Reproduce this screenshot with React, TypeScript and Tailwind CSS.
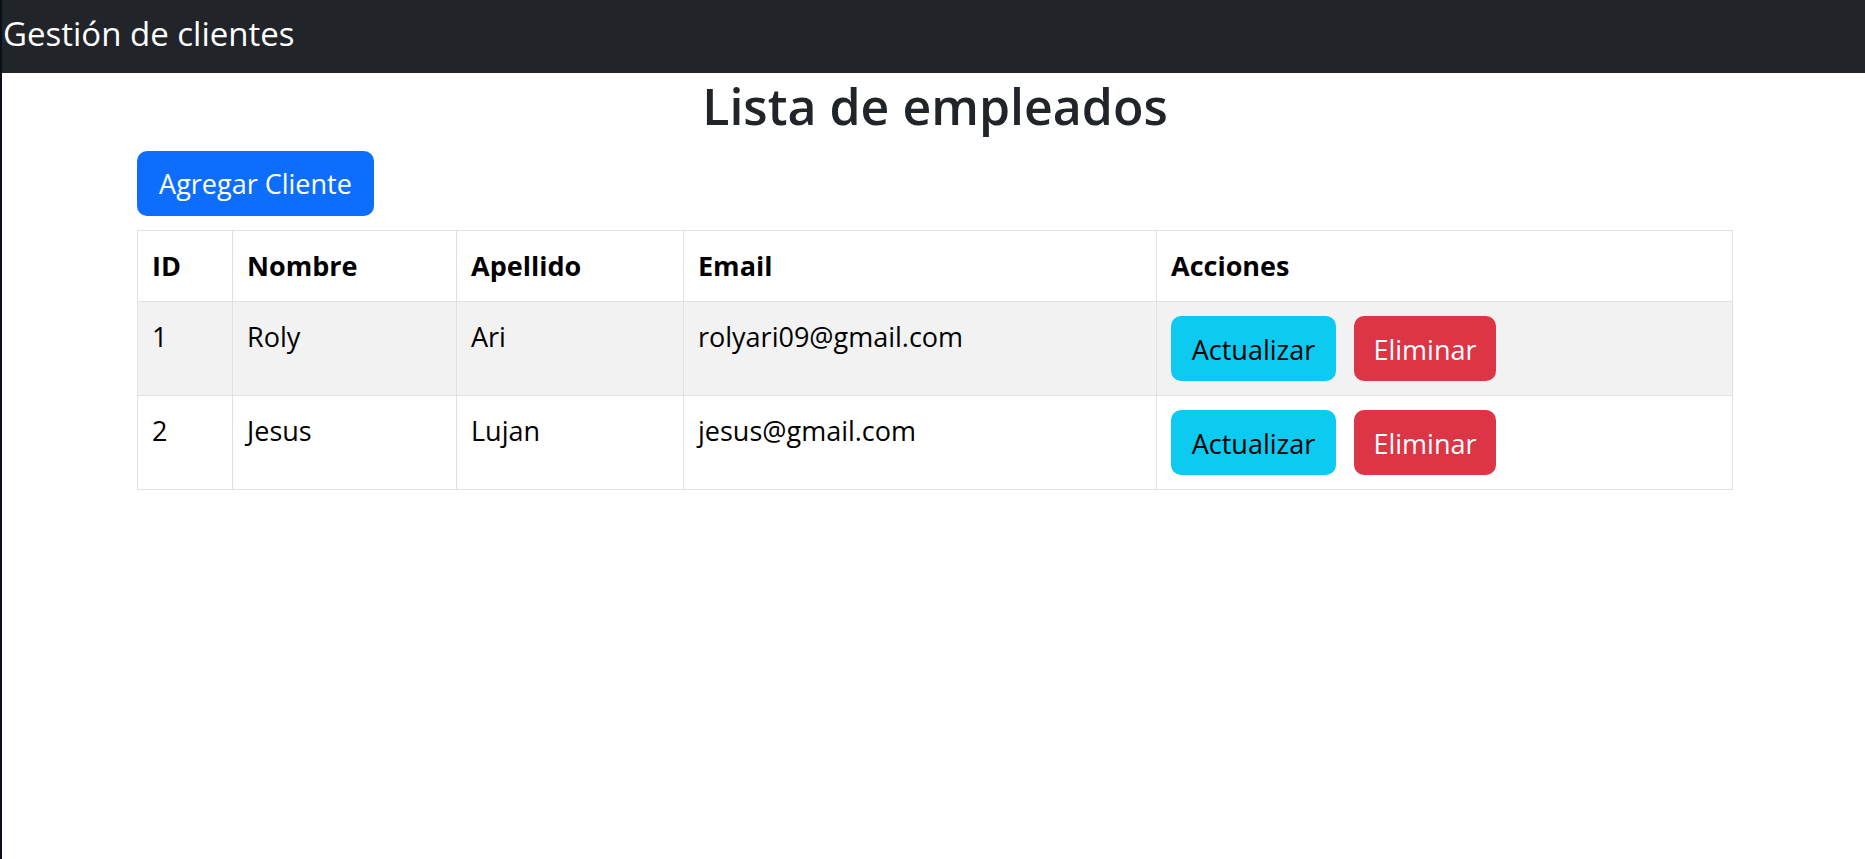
const CLIENTES = [
  { id: 1, nombre: 'Roly', apellido: 'Ari', email: 'rolyari09@gmail.com' },
  { id: 2, nombre: 'Jesus', apellido: 'Lujan', email: 'jesus@gmail.com' },
]

const font = { fontFamily: '"Segoe UI", "Open Sans", "Noto Sans", sans-serif' }

export default function App() {
  return (
    <div className="min-h-screen bg-white border-l-2 border-[#0b0f1a]" style={font}>
      <nav className="h-[73px] bg-[#212529] pt-[17px] pl-[1px]">
        <span className="text-[33px] leading-[33px] text-white">Gestión de clientes</span>
      </nav>

      <div className="w-[1596px] ml-[135px]">
        <h2 className="mt-[3px] mb-[14px] text-center text-[50px] leading-[61px] font-semibold text-[#212529]">
          Lista de empleados
        </h2>

        <button className="w-[237px] h-[65px] pt-[2px] rounded-[10px] bg-[#0d6efd] text-white text-[27px] flex items-center justify-center">
          Agregar Cliente
        </button>

        <table className="mt-[14px] w-[1596px] table-fixed border border-[#dee2e6] text-[27px] leading-[42px] text-black">
          <thead>
            <tr>
              <th className="w-[95px] border border-[#dee2e6] p-[14px] text-left font-bold">ID</th>
              <th className="w-[224px] border border-[#dee2e6] p-[14px] text-left font-bold">Nombre</th>
              <th className="w-[227px] border border-[#dee2e6] p-[14px] text-left font-bold">Apellido</th>
              <th className="w-[473px] border border-[#dee2e6] p-[14px] text-left font-bold">Email</th>
              <th className="border border-[#dee2e6] p-[14px] text-left font-bold">Acciones</th>
            </tr>
          </thead>
          <tbody>
            {CLIENTES.map((c, i) => (
              <tr key={c.id} className={i % 2 === 0 ? 'bg-[#f2f2f2]' : 'bg-white'}>
                <td className="border border-[#dee2e6] p-[14px] align-top">{c.id}</td>
                <td className="border border-[#dee2e6] p-[14px] align-top">{c.nombre}</td>
                <td className="border border-[#dee2e6] p-[14px] align-top">{c.apellido}</td>
                <td className="border border-[#dee2e6] p-[14px] align-top">{c.email}</td>
                <td className="border border-[#dee2e6] p-[14px] align-top">
                  <div className="flex gap-[18px]">
                    <button className="w-[165px] h-[65px] pt-[2px] rounded-[10px] bg-[#0dcaf0] text-black flex items-center justify-center">
                      Actualizar
                    </button>
                    <button className="w-[142px] h-[65px] pt-[2px] rounded-[10px] bg-[#dc3545] text-white flex items-center justify-center">
                      Eliminar
                    </button>
                  </div>
                </td>
              </tr>
            ))}
          </tbody>
        </table>
      </div>
    </div>
  )
}
